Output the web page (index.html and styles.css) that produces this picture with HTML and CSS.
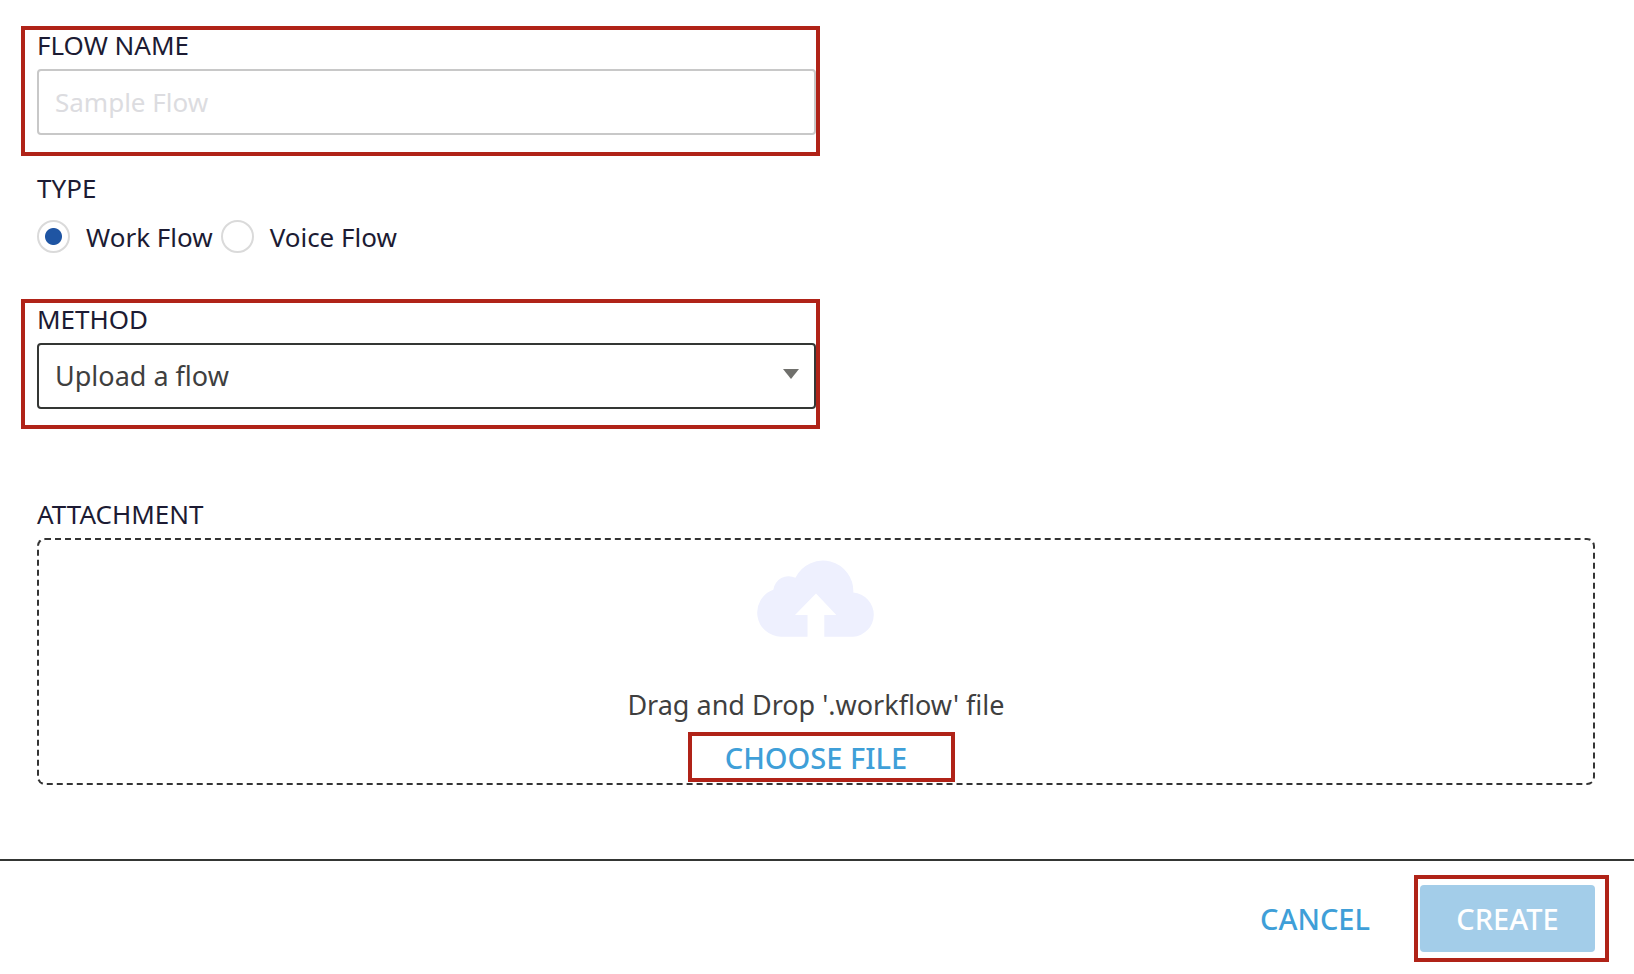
FILE: index.html
```html
<!DOCTYPE html>
<html lang="en">
<head>
<meta charset="utf-8">
<meta name="viewport" content="width=device-width, initial-scale=1">
<title>Create Flow</title>
<link rel="stylesheet" href="styles.css">
</head>
<body>
<form class="flow-form">
  <div class="fields">
    <div class="field field-name highlight">
      <label class="label" for="flow-name">FLOW NAME</label>
      <input class="control" id="flow-name" type="text" placeholder="Sample Flow">
    </div>

    <fieldset class="type">
      <legend class="label">TYPE</legend>
      <div class="options">
        <input class="radio" type="radio" name="type" id="type-work" checked>
        <label class="option" for="type-work">Work Flow</label>
        <input class="radio" type="radio" name="type" id="type-voice">
        <label class="option" for="type-voice">Voice Flow</label>
      </div>
    </fieldset>

    <div class="field field-method highlight">
      <label class="label" for="method">METHOD</label>
      <div class="select-wrap">
        <select class="control select" id="method">
          <option>Upload a flow</option>
        </select>
        <svg class="caret" viewBox="0 0 16 10" aria-hidden="true"><path d="M0 0h16L8 10z"/></svg>
      </div>
    </div>

    <div class="attachment">
      <div class="label" id="attachment-label">ATTACHMENT</div>
      <div class="dropzone" role="group" aria-labelledby="attachment-label">
        <svg class="cloud" viewBox="0 0 118 77" aria-hidden="true">
          <path d="M24 76.7A24.2 24.2 0 0 1 16.3 29.7A15.5 15.5 0 0 1 38.4 17.8A30.5 30.5 0 0 1 96.3 32.6A22.1 22.1 0 0 1 96 76.7H67.3V55H79.3L59 33.5L38 55H50.5V76.7Z"/>
        </svg>
        <p class="hint">Drag and Drop '.workflow' file</p>
        <button class="link-button choose highlight" type="button">CHOOSE FILE</button>
      </div>
    </div>
  </div>

  <footer class="actions">
    <button class="link-button cancel" type="button">CANCEL</button>
    <div class="create-wrap highlight">
      <button class="create" type="submit" disabled>CREATE</button>
    </div>
  </footer>
</form>
</body>
</html>
```
FILE: styles.css
```css
* {
  box-sizing: border-box;
}

body {
  margin: 0;
  background: #fff;
  color: #1c1b33;
  font-family: "Noto Sans", sans-serif;
  font-size: 26px;
  line-height: 32px;
}

button,
input,
select {
  margin: 0;
  font: inherit;
}

.fields {
  padding: 29px 39px 74px 37px;
}

.label {
  display: block;
  padding: 0;
  margin-bottom: 8px;
}

.field {
  width: 50%;
}

.control {
  display: block;
  width: 100%;
  height: 66px;
  padding: 0 16px;
  border: 2px solid #c8c8c8;
  border-radius: 4px;
  background: #fff;
  color: #3f3f3f;
}

.control::placeholder {
  color: #dcdce0;
  opacity: 1;
}

.type {
  min-width: 0;
  margin: 37px 0 0;
  padding: 0;
  border: 0;
}

.options {
  display: flex;
  align-items: center;
  margin-top: 8px;
}

.radio {
  appearance: none;
  width: 33px;
  height: 33px;
  border: 2px solid #dadada;
  border-radius: 50%;
  background: #fff;
}

.radio:checked {
  background: radial-gradient(circle, #1f55a3 8px, #fff 9px);
}

.option {
  margin: 0 8px 0 16px;
}

.field-method {
  margin-top: 50px;
}

.select-wrap {
  position: relative;
}

.select {
  appearance: none;
  padding-right: 48px;
  border-color: #343634;
  font-size: 27px;
}

.caret {
  position: absolute;
  top: 26px;
  right: 17px;
  width: 16px;
  height: 10px;
  fill: #70706c;
  pointer-events: none;
}

.attachment {
  margin-top: 89px;
}

.dropzone {
  display: flex;
  flex-direction: column;
  align-items: center;
  padding: 20px 0 5px;
  border: 2px dashed #343434;
  border-radius: 8px;
}

.cloud {
  width: 118px;
  height: 77px;
  fill: #eef0fe;
}

.hint {
  margin: 48px 0 13px;
  color: #3f3f3f;
  font-size: 27px;
  line-height: 40px;
}

.link-button {
  padding: 0;
  border: 0;
  background: none;
  color: #3f9fd8;
  font-size: 29px;
  font-weight: 500;
  line-height: 40px;
}

.actions {
  display: flex;
  align-items: center;
  justify-content: flex-end;
  gap: 50px;
  padding: 24px 39px 22px;
  border-top: 2px solid #343634;
}

.create {
  display: block;
  min-width: 175px;
  height: 67px;
  padding: 0 36px;
  border: 0;
  border-radius: 4px;
  background: #a3cde9;
  color: #fff;
  font-size: 29px;
  font-weight: 500;
}

/* Red call-out frames drawn over the controls */
.highlight {
  position: relative;
}

.highlight::after {
  content: "";
  position: absolute;
  border: 4px solid #b02318;
  pointer-events: none;
}

.field-name::after {
  inset: -3px -4px -21px -16px;
}

.field-method::after {
  inset: -4px -4px -20px -16px;
}

.choose::after {
  inset: -6px -48px -4px -37px;
}

.create-wrap::after {
  inset: -10px -14px -10px -6px;
}
```
